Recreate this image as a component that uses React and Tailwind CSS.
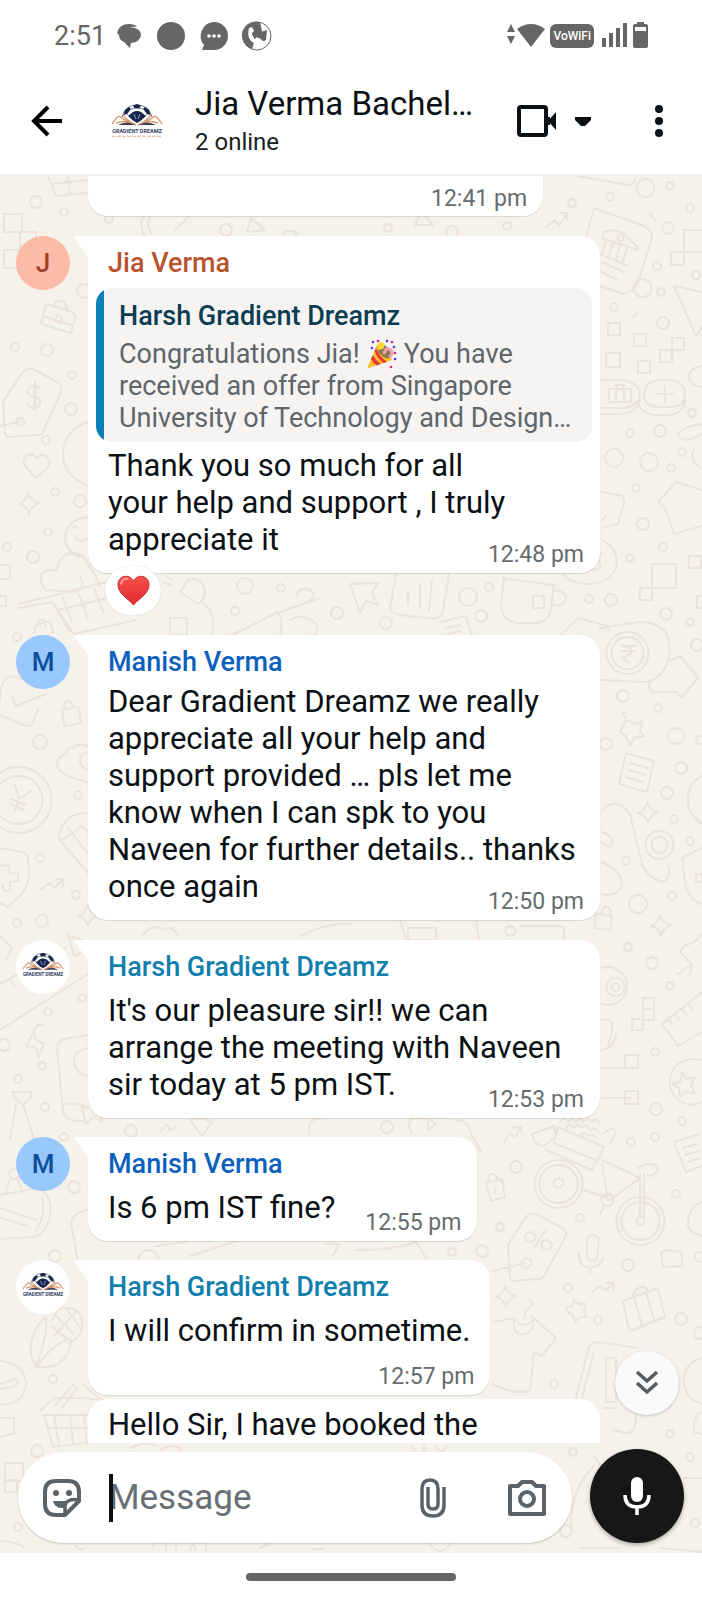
const messages = [
  {
    id: 1,
    author: 'Jia Verma',
    nameColor: 'text-[#b9532f]',
    avatar: 'jia',
    quote: {
      author: 'Harsh Gradient Dreamz',
      before: 'Congratulations Jia!',
      after: 'You have',
      rest: 'received an offer from Singapore\nUniversity of Technology and Design…',
    },
    lines: ['Thank you so much for all', 'your help and support , I truly', 'appreciate it'],
    time: '12:48 pm',
    reaction: true,
    layout: 'wide',
    textGap: 'mt-[5px]',
    margin: 'mt-5',
  },
  {
    id: 2,
    author: 'Manish Verma',
    nameColor: 'text-[#0b5fbf]',
    avatar: 'manish',
    lines: [
      'Dear Gradient Dreamz we really',
      'appreciate all your help and',
      'support provided … pls let me',
      'know when I can spk to you',
      'Naveen for further details.. thanks',
      'once again',
    ],
    time: '12:50 pm',
    layout: 'wide',
    textGap: 'mt-1.5',
    margin: 'mt-[62px]',
  },
  {
    id: 3,
    author: 'Harsh Gradient Dreamz',
    nameColor: 'text-[#0f7fae]',
    avatar: 'logo',
    lines: ["It's our pleasure sir!! we can", 'arrange the meeting with Naveen', 'sir today at 5 pm IST.'],
    time: '12:53 pm',
    layout: 'wide',
    textGap: 'mt-2.5',
    margin: 'mt-5',
  },
  {
    id: 4,
    author: 'Manish Verma',
    nameColor: 'text-[#0b5fbf]',
    avatar: 'manish',
    lines: ['Is 6 pm IST fine?'],
    time: '12:55 pm',
    layout: 'inline',
    textGap: 'mt-2.5',
    margin: 'mt-[19px]',
  },
  {
    id: 5,
    author: 'Harsh Gradient Dreamz',
    nameColor: 'text-[#0f7fae]',
    avatar: 'logo',
    lines: ['I will confirm in sometime.'],
    time: '12:57 pm',
    layout: 'stacked',
    textGap: 'mt-2.5',
    margin: 'mt-[19px]',
  },
]

function LogoMark({ className, tagline }) {
  return (
    <svg viewBox="0 0 52 36" className={className} aria-hidden="true">
      <path d="M11 14 Q14 2 26 2 Q38 2 41 14" fill="none" stroke="#6f7688" strokeWidth="1" />
      <path d="M22 2.5 L26 1 L30 2.5 L28.500 5.500 H23.500 Z" fill="#17264a" />
      <path d="M14 7 L18 4 L20 6 L16 11 L12.500 12 Z" fill="#17264a" />
      <path d="M38 7 L34 4 L32 6 L36 11 L39.500 12 Z" fill="#17264a" />
      <path d="M17 13 L22 9 Q26 7 30 9 L35 13 L30 17.500 L26 20 L22 17.500 Z" fill="#17264a" />
      <path d="M23 11 L25 16 M29 11 L27 16" stroke="#8fa6cf" strokeWidth="1" />
      <path d="M20 6 L23.500 5.500 M32 6 L28.500 5.500 M16 11 L18 13 M36 11 L34 13" stroke="#7b8294" strokeWidth="1" />
      <path d="M12 11 Q14 17 25 22 M8 13 Q14 18 25 22 M1 21 Q5 15 8 13 M5 20 Q14 16 25 22" fill="none" stroke="#d99a72" strokeWidth="1.500" />
      <path d="M40 11 Q38 17 27 22 M44 13 Q38 18 27 22 M51 21 Q47 15 44 13 M47 20 Q38 16 27 22" fill="none" stroke="#d99a72" strokeWidth="1.500" />
      <path d="M7 22 Q16 17 24 22 Z M45 22 Q36 17 28 22 Z" fill="#3c3f57" />
      <text x="26" y="30" textAnchor="middle" fontSize="5.500" fontWeight="700" fontFamily="Roboto, sans-serif" fill="#33405f">
        GRADIENT DREAMZ
      </text>
      {tagline && <path d="M1 33.500 H51" stroke="#e3c6b4" strokeWidth="1.500" strokeDasharray="4 1" />}
    </svg>
  )
}

function Avatar({ kind }) {
  if (kind === 'logo') {
    return (
      <div className="flex size-[54px] shrink-0 items-center justify-center rounded-full bg-white">
        <LogoMark className="w-[42px]" />
      </div>
    )
  }
  if (kind === 'jia') {
    return (
      <div className="flex size-[54px] shrink-0 items-center justify-center rounded-full bg-[#fdbaa6] text-[26px] font-medium text-[#9c3f26]">
        J
      </div>
    )
  }
  return (
    <div className="flex size-[54px] shrink-0 items-center justify-center rounded-full bg-[#98c8fd] text-[26px] font-medium text-[#0b4f9c]">
      M
    </div>
  )
}

function PartyPopper() {
  return (
    <svg viewBox="0 0 30 30" className="mx-[7px] inline-block size-[30px] align-[-6px]" role="img" aria-label="party popper">
      <path d="M10 6 Q22 10 25 21 L2 29 Q0 29 1 27 Z" fill="#fbc02d" />
      <path d="M6 16 Q9 22 14 25 L9.500 26.500 Q6 24 4 20 Z M9 9 Q12 17 20 23 L16.500 24 Q10 19 7.500 12 Z" fill="#e53935" />
      <ellipse cx="17" cy="12" rx="5" ry="9" transform="rotate(-42 17 12)" fill="#8d7b4e" />
      <path d="M11 11 Q8 4 14 3 Q20 4 16 10 Z" fill="#fdd835" />
      <path d="M17 15 Q19 7 24 11 Q27 15 22 18" fill="none" stroke="#f6a5b5" strokeWidth="3" />
      <g fill="#5e35f2">
        <circle cx="6" cy="3" r="1.300" /><circle cx="20" cy="2" r="1.300" /><circle cx="5" cy="9" r="1.300" />
        <circle cx="27" cy="8" r="1.300" /><circle cx="28" cy="20" r="1.300" />
      </g>
      <g fill="#e0218a">
        <circle cx="11" cy="2" r="1.300" /><circle cx="25" cy="3" r="1.300" /><circle cx="28" cy="14" r="1.300" /><circle cx="24" cy="28" r="1.300" />
      </g>
    </svg>
  )
}

function Heart() {
  return (
    <svg viewBox="0 0 34 32" className="w-[33px]" role="img" aria-label="heart">
      <defs>
        <linearGradient id="heart-fill" x1="0" y1="0" x2="0" y2="1">
          <stop offset="0" stopColor="#f9504c" />
          <stop offset="1" stopColor="#e02a2f" />
        </linearGradient>
      </defs>
      <path
        d="M17 31 C14 26 1 20 1 10 C1 1 12 -2 17 6 C22 -2 33 1 33 10 C33 20 20 26 17 31 Z"
        fill="url(#heart-fill)"
        stroke="#c9262b"
        strokeWidth="1"
      />
      <path d="M4 9 Q6 3 11 4" fill="none" stroke="#ff9a92" strokeWidth="2" strokeLinecap="round" />
    </svg>
  )
}

const circles = [
  [36, 202, 6], [64, 212, 4], [109, 219, 4], [84, 291, 7], [15, 347, 4], [47, 350, 6], [71, 409, 6], [72, 375, 4],
  [46, 440, 4], [55, 492, 4], [80, 501, 6], [48, 532, 4], [7, 547, 4], [33, 557, 6], [17, 637, 4], [226, 230, 6],
  [245, 586, 8], [281, 588, 4], [235, 611, 4], [337, 613, 6], [388, 228, 4], [452, 232, 6], [507, 226, 4], [572, 203, 4],
  [610, 197, 4], [670, 186, 4], [690, 208, 4], [668, 228, 6], [657, 266, 4], [696, 275, 4], [661, 292, 4], [614, 307, 4],
  [663, 323, 6], [692, 413, 4], [660, 431, 6], [630, 433, 4], [614, 458, 9], [649, 462, 9], [682, 452, 4], [671, 468, 4],
  [636, 488, 4], [643, 524, 6], [663, 547, 4], [630, 558, 4], [468, 597, 9], [489, 587, 4], [589, 599, 4], [611, 600, 6],
  [481, 616, 6], [386, 623, 6], [666, 614, 6], [690, 622, 4], [697, 645, 6], [623, 696, 6], [658, 708, 4], [606, 744, 6],
  [676, 736, 8], [700, 740, 4], [681, 768, 6], [667, 793, 6], [674, 819, 4], [690, 841, 4], [626, 861, 4], [638, 904, 9],
  [672, 896, 4], [628, 947, 4], [652, 963, 6], [670, 986, 4], [655, 1052, 4], [40, 742, 7], [78, 795, 4], [40, 858, 4],
  [76, 895, 4], [17, 923, 4], [42, 921, 6], [82, 998, 4], [48, 1012, 4], [4, 1045, 6], [42, 1066, 4], [18, 1079, 4],
  [45, 1107, 4], [64, 1137, 4], [131, 1131, 6], [74, 1187, 6], [55, 1256, 6], [53, 1379, 4], [37, 1451, 6], [18, 1527, 4],
  [387, 1127, 6], [516, 1167, 6], [500, 1227, 4], [482, 1251, 6], [452, 1252, 4], [580, 1218, 4], [628, 1265, 6], [631, 1142, 4],
  [655, 1137, 4], [656, 1109, 6], [682, 1121, 4], [676, 1194, 4], [568, 1288, 4], [681, 1319, 6], [598, 1320, 4], [554, 1384, 4],
  [670, 1434, 4], [573, 1452, 4], [690, 1457, 4], [566, 1531, 6], [695, 1523, 4], [700, 1257, 5], [700, 1333, 6],
]

const sparkles = [[30, 504], [649, 813], [662, 926], [507, 1297], [89, 916]]

const squares = [
  [4, 214, 18], [20, 232, 16], [4, 250, 18], [671, 252, 13], [684, 230, 22], [608, 323, 12], [634, 334, 12], [606, 353, 14],
  [660, 350, 12], [672, 338, 12], [638, 361, 12], [652, 564, 24], [640, 588, 12], [689, 556, 12], [697, 596, 12], [170, 618, 17],
  [643, 998, 11], [643, 1009, 11], [632, 1019, 11], [625, 1055, 13], [625, 1091, 13], [-4, 565, 14], [-4, 596, 10],
  [5, 1463, 18], [5, 1480, 12],
]

const linework = [
  // gift boxes, briefcases and baskets
  'M48 176 l8 20 l32 -3 M52 184 l36 -4 M68 176 l2 18',
  'M46 304 l26 8 q4 2 3 6 l-4 15 l-30 -9 z M43 316 l28 9 M54 306 q2 -8 10 -4 l4 8 M57 315 l5 2 l-1 6 l-6 -2 z',
  'M40 1411 l14 -13 h28 l22 2 M42 1415 h60 M44 1415 l9 32 l40 -5 M54 1415 l5 30 M70 1415 l3 30 M84 1414 l3 30 M47 1428 h42 M55 1405 l18 -20 l4 3 l-16 21 M82 1384 l20 16',
  'M623 1301 l32 -12 q3 0 4 4 l6 24 l-32 13 q-4 0 -5 -4 z M634 1297 l8 28 M646 1292 l8 28 M633 1296 q2 -10 12 -9 l4 6',
  'M600 380 h20 q20 2 20 15 q-2 13 -20 13 h-20 M609 389 h22 v13 h-22 z M616 389 v-4 h8 v4 M616 389 v13 M624 389 v13 M600 414 h20 q18 -2 20 -14',
  'M660 380 h10 q15 2 15 14 q0 13 -15 13 h-10 q-16 0 -16 -13 q2 -14 16 -14 M656 394 h17 M665 386 v16 M638 404 q4 9 16 11 h16 q14 -2 15 -15',
  // price tags
  'M3 402 l20 -30 q6 -5 12 -2 l22 12 q6 4 4 10 l-18 40 q-2 4 -8 3 l-26 2 q-4 -1 -4 -5 z M20 418 a4 4 0 1 0 1 0 M0 426 l18 -4 M40 388 q-10 -6 -12 3 q0 6 8 6 q7 2 3 9 q-6 5 -12 -2 M35 382 v28',
  'M508 1245 l18 -28 q4 -5 10 -3 l26 14 q5 3 4 8 l-22 40 q-3 4 -8 3 l-22 2 q-4 -1 -4 -5 z M526 1258 a5 5 0 1 0 1 0 M493 1271 l32 -8 M530 1232 a5 5 0 1 0 1 0 M546 1240 a5 5 0 1 0 1 0 M546 1230 l-12 18',
  // hearts and smiles
  'M36 478 l-11 -12 q-4 -7 3 -11 q6 -2 9 4 q3 -6 9 -3 q6 4 2 11 z',
  'M88 422 q-24 8 -25 32 q0 22 25 32 M88 517 q-22 2 -23 22 q2 14 16 18 M72 528 q3 -3 6 0 M74 536 q6 8 14 2',
  'M46 590 q-8 -8 -4 -16 q5 -6 14 -3 q4 -18 18 -18 q14 2 14 14 M46 590 l30 2 q10 -6 4 -16 M82 556 q14 18 18 30',
  // cart
  'M18 604 l34 -8 l54 -14 M18 608 l34 -6 l18 30 M52 602 l22 32 l62 -14 M62 596 l10 26 M78 592 l10 26 M94 588 l10 26 M58 610 l50 -12',
  'M34 633 l2 -8 l14 -4 l3 12 M38 624 q0 -6 5 -4 q4 2 2 6',
  // padlocks
  'M62 710 l14 -3 q2 0 3 2 l2 14 l-14 3 q-3 0 -3 -2 z M64 709 q-1 -8 4 -8 q5 0 5 6',
  'M596 914 l16 2 l-2 14 l-16 -2 z M601 914 q2 -9 7 -7 q4 2 2 8',
  'M486 1183 l16 -4 l3 18 l-14 4 z M489 1182 q-2 -9 4 -8 q4 1 4 6 M495 1189 v4',
  // ticked envelope
  'M0 700 q0 -22 12 -24 l14 4 M12 697 l4 9 l30 -12 M0 715 l26 11 q6 0 7 -4 l5 -13',
  // coin and shield
  'M19 767 a33 33 0 1 1 -1 0 M19 776 a24 24 0 1 1 -1 0 M15 785 l4 14 l12 -8 M19 799 l-5 13 M10 799 l16 6 M10 804 l14 6',
  'M0 848 l22 4 q7 1 6 8 q4 24 -8 36 l-12 11 l-8 -4 M0 866 l8 -1 l2 8 l8 1 v7 l-8 1 v8 l-6 1 l-2 -7',
  'M88 746 q-10 -4 -14 2 q-8 -2 -8 6 q-12 4 -8 14 q4 8 30 14 M88 752 q-8 2 -8 8 q0 8 8 10',
  'M88 813 q-14 0 -20 6 q-10 10 -9 20 l29 34 M62 840 l20 -14 l6 6 M68 828 l20 26',
  // trend arrows
  'M40 890 l10 -7 l4 5 l9 -9 M56 879 h7 v7',
  'M546 227 l9 -7 l4 6 l8 -12 M560 213 l7 0 v7',
  'M504 1143 l6 -10 l5 4 l6 -10 M513 1128 l8 -1 l1 7',
  'M592 1292 l8 -6 l6 4 l8 -7 M606 1283 l8 0 l-1 7',
  // camera, tie, notebook
  'M88 1035 l-24 4 q-7 2 -7 10 l6 62 q1 6 8 9 l17 2 M88 1048 q-14 2 -14 14 q2 12 14 14 M66 1104 q12 -2 22 4 M82 1106 l4 18 l8 -8 l8 6 l-2 -12',
  'M12 1092 h20 l-2 7 l-7 6 l-7 -6 z M16 1104 l-6 36 M23 1104 l12 38',
  'M0 1195 l34 -6 q10 0 14 8 q6 14 -2 30 q-4 8 -12 10 l-34 2 M0 1208 l36 12 M0 1218 l28 8 M42 1197 q4 18 -6 34 M14 1168 q-8 4 -3 10 q6 3 9 -3 q0 -6 -6 -7 M10 1180 l-4 12 M18 1180 l4 10',
  'M88 1210 q-20 4 -16 18 l6 34',
  // plane, ruler
  'M0 936 l12 12 l-6 12 M0 984 l66 -36 M0 1030 l88 -56 M10 980 l4 6 M18 976 l4 6 M26 972 l4 6',
  'M68 934 l6 22 l16 -8 M68 936 l14 4',
  'M34 1032 l-8 14 l10 2 l2 10 l6 -14 l-8 -4 z M34 1030 q4 -8 10 -4',
  // corn
  'M36 1367 q-8 -14 -4 -28 q4 -14 14 -22 q2 18 -10 50 q20 -26 34 -28 q2 10 -6 20 q-10 10 -28 8 M52 1320 q6 -14 14 -12 q14 0 16 12 q2 16 -12 22 M56 1316 l18 18 M66 1309 l14 18 M52 1326 l14 12 M76 1312 l-22 24',
  'M0 1361 q24 2 26 22 q0 20 -26 22 M0 1384 l16 -5 q3 4 -1 7 l-15 3 M0 1418 h14 v15 l-14 4',
  // shelf of doodles between the bubbles
  'M144 235 q-6 -14 2 -22 M152 234 q-8 -12 0 -21 M175 230 q16 -14 14 -16 M247 232 l4 -14 l14 12 z M284 235 v-4 h12 v4 M415 225 l6 -14 l12 14 z',
  'M180 592 l8 -12 q10 -4 16 6 q4 12 -6 18 z M204 604 q12 8 8 30 M164 583 l8 2 M166 576 l6 4 M230 636 l48 -24 q6 8 2 22 M280 612 l40 -14 M296 597 q2 -10 12 -8 q10 4 2 12 M290 620 q14 -8 26 4 q4 10 -6 12',
  'M350 584 l28 -1 l-6 10 l6 12 l-12 -4 l-6 12 z M396 574 l-6 34 q2 6 10 7 l34 4 q8 -2 9 -8 l6 -37 M408 592 v12 M420 584 v22 M432 580 l-3 30 M504 577 l-3 30 q2 14 16 16 h20 q12 -2 14 -14 l3 -24 l-48 -6 M533 596 h11 v12 h-11 z M555 590 q14 2 10 12 q-4 6 -14 2',
  'M440 622 l26 -6 l6 20 M446 628 l14 -3 M448 634 l12 -3 M560 636 l18 -18 l30 8 l2 6',
  'M142 936 q10 -14 22 -6 q8 -6 14 6 M300 936 q30 -14 50 -12 M400 920 l6 20 M408 928 h28 v12 h-28 z M476 922 l3 18 M520 926 h40 q4 0 4 6 v8 M510 926 a5 5 0 1 0 1 0',
  'M190 1120 l12 16 l10 -14 l-10 -4 z M160 1132 l6 -8 l4 6 l6 -4 M310 1134 q-4 -16 12 -16 M412 1134 q-8 -16 6 -16 h30 M428 1118 l8 6 l-8 6 z M455 1120 q14 0 16 14 l10 18',
  'M148 1250 a10 10 0 1 0 1 0 M156 1246 l30 -4 M190 1256 l50 -16 M356 1250 q40 0 60 -8 l10 16 M325 1244 h14 l-6 12',
  'M130 1448 q18 -8 26 -2 M160 1450 q14 -8 22 0 M412 1446 l4 6 M424 1446 v8 M436 1446 q6 10 10 0',
  'M76 1546 q4 6 10 2 M152 1548 l4 -6 h6 M166 1550 v-8 h10 v8 M190 1550 l3 -7 l3 7 M206 1543 v8 M260 1548 l8 -4 M312 1549 h12 M430 1544 q10 14 20 0 M0 1541 q14 0 24 6',
  // bank page
  'M586 238 l8 -30 l50 18 q8 4 8 12 l-14 44 q-4 10 -14 12 l-24 -8 M604 232 q16 -6 26 8 q8 6 8 10 l-36 -12 z M606 240 l-4 14 M613 242 l-4 14 M620 245 l-4 14 M627 248 l-4 14 M600 254 l28 12 M602 262 l22 10 M602 272 l16 8 M620 235 a3 3 0 1 0 1 0',
  'M645 197 a9 9 0 1 1 1 0 M650 214 l5 6 M642 297 a9 9 0 1 1 1 0 M637 313 l-5 5',
  'M702 292 l-28 -6 l22 50 l6 -10 M578 176 l50 9 q6 0 7 -6 M702 366 q-14 2 -13 12 q2 8 13 9 M702 424 q-24 4 -24 12 q6 8 24 -2 M694 450 q-6 8 6 18',
  'M602 492 l20 4 q3 4 2 8 l-6 20 l-16 4 M602 520 l4 -4 M676 482 l26 8 M676 482 l-18 20 l6 4 l10 28 l28 -8 M602 540 q18 10 14 28 q-6 16 -30 16 q-18 -2 -22 -10 M590 550 q16 0 8 10 q8 10 -8 10',
  // rupee note
  'M600 628 l40 -6 q18 0 27 12 q6 20 -2 34 q-8 14 -22 14 l-42 -2 M628 632 a21 21 0 1 1 -1 0 M628 637 a16 16 0 1 1 -1 0 M622 646 h14 M622 651 h12 M624 646 q10 2 6 8 q-4 4 -8 3 l8 7',
  'M668 662 l12 -6 l18 22 l-17 20 l-4 -6 h-22 q-8 0 -5 -12',
  'M626 720 l10 4 l6 -2 l-2 10 l4 4 l-10 2 l-4 8 l-4 -10 l-6 -4 z M626 718 q-6 -6 0 -6',
  'M626 753 l28 8 l-7 31 l-28 -8 z M630 763 l18 5 M628 770 l18 5 M626 777 l16 5',
  // stethoscope
  'M602 810 q14 -14 28 4 l12 50 q6 14 20 18 q10 -4 6 -16 M660 831 a14 14 0 1 1 -1 0 M660 837 a8 8 0 1 1 -1 0 M602 832 q12 4 10 12 q-4 6 -10 -2 M602 862 q20 10 20 22 q-4 14 -20 10',
  'M702 776 q-16 8 -14 28 q2 12 14 20 M702 848 l-20 10 l4 30 q6 14 16 16 M696 874 h6 v8 h-6 z',
  'M702 934 l-8 8 l-10 4 l-4 6 l12 12 l-2 12 M692 964 l-14 10 M602 968 a19 19 0 1 1 0 36 M616 978 a9 9 0 1 1 -1 0 M616 983 a4 4 0 1 1 -1 0',
  'M702 992 l-40 32 l16 22 l24 -14 M668 1020 l4 4 M675 1015 l4 4 M682 1010 l4 4 M689 1005 l4 4',
  'M602 1020 q12 -4 10 12 l-4 14 M602 1050 q12 -2 14 -16 M602 1068 h28 M602 1098 h28 M702 1060 q-18 -4 -28 8 q-10 18 4 32 q12 8 24 2 M682 1072 l5 7 l8 -2 l-4 8 l4 8 l-9 -1 l-6 5 l-1 -9 l-6 -4 l8 -3 z',
  // bicycle with a crate of fruit
  'M559 1160 a24 24 0 1 1 -1 0 M559 1165 a19 19 0 1 1 -1 0 M559 1178 a5 5 0 1 1 -1 0',
  'M641 1197 a24 24 0 1 1 -1 0 M641 1202 a19 19 0 1 1 -1 0 M641 1217 a4 4 0 1 1 -1 0',
  'M558 1127 l46 20 l-6 14 l-44 -18 z M546 1150 l46 20 l6 -12 M532 1134 l22 -8 l2 10 l-12 10 q-10 0 -12 -12 M584 1190 l24 8 M602 1160 l38 18 l-30 22 M602 1164 l6 36 M640 1174 v44 M644 1174 v44 M638 1168 q14 -8 20 0 q-2 8 -10 8 M608 1194 a6 6 0 1 1 -1 0 M604 1206 l-4 8',
  'M560 1122 q4 -6 8 0 q4 -6 8 0 q4 -6 8 0 q4 -6 8 0 q4 -6 8 2 M566 1128 q4 -6 8 0 q4 -6 8 0 q4 -6 8 2 q4 -4 8 2 M580 1136 q4 -6 8 0 q4 -4 8 2 M602 1134 l10 -6 l4 4 l-6 12',
  'M674 1142 l26 -8 M674 1142 l12 30 l16 -6 M683 1148 l14 -4 M685 1155 l14 -4 M688 1162 l12 -4',
  'M587 1238 q6 -6 12 0 l-2 20 q-6 6 -10 0 z M579 1252 q-2 14 12 16 q10 -2 12 -10 M590 1268 v5 M661 1253 l6 -3 l14 2 l2 14 l-20 1 z M702 1202 q-12 4 -14 20 q-2 10 14 14',
  'M566 1307 l6 -1 l2 -6 l5 4 l7 0 l-2 7 l3 6 l-7 0 l-5 5 l-2 -7 l-6 -3 z',
  // t-shirt on a hanger
  'M494 1322 l20 -4 q10 14 20 0 l22 20 l-14 18 l-8 -4 l-4 38 q-12 6 -38 -6 M514 1318 q-2 18 10 16 q12 -2 8 -18 M524 1318 l2 -8 q10 -6 4 -10',
  'M576 1398 l12 -48 q2 -8 10 -8 l40 6 M582 1398 l12 -46 M606 1358 h10 v44 h-10 z M604 1408 h12 M636 1414 q0 20 -10 19 l-14 -3',
  'M702 1358 q-20 6 -18 26 q2 16 18 20 M702 1412 q-10 4 -8 20 l8 2 M572 1532 q-4 -40 22 -66 M594 1456 l10 14 M684 1478 h18 M580 1548 h40 M660 1548 l42 4',
]

function Wallpaper() {
  return (
    <svg
      viewBox="0 176 702 1377"
      preserveAspectRatio="xMidYMin slice"
      className="absolute inset-0 size-full"
      fill="none"
      stroke="#ece2d9"
      strokeWidth="2"
      strokeLinecap="round"
      strokeLinejoin="round"
      aria-hidden="true"
    >
      {circles.map(([x, y, r]) => (
        <circle key={`${x}-${y}`} cx={x} cy={y} r={r} />
      ))}
      {squares.map(([x, y, s]) => (
        <rect key={`${x}-${y}`} x={x} y={y} width={s} height={s} />
      ))}
      {sparkles.map(([x, y]) => (
        <path key={`${x}-${y}`} d={`M${x - 2} ${y - 11} q2 8 11 10 q-8 3 -10 11 q-2 -8 -10 -10 q8 -3 9 -11 z`} />
      ))}
      {linework.map((d) => (
        <path key={d} d={d} />
      ))}
    </svg>
  )
}

function StatusBar() {
  return (
    <div className="flex h-[72px] items-center justify-between pr-[54px] pl-[54px] text-[#666]">
      <div className="flex items-center">
        <span className="text-[27px] leading-8">2:51</span>
        <svg viewBox="0 0 156 30" className="ml-2.5 h-[30px] w-[156px]" fill="#666" aria-hidden="true">
          <path d="M1 12 Q3 3 13 3 Q19 3 21 6 Q8 4 3 14 Z" />
          <path d="M3 14 Q5 6 14 6 Q25 7 25 14 Q24 21 15 22 L14 27 L8 21 Q3 19 3 14 Z" />
          <circle cx="55" cy="15" r="14" />
          <path d="M98 1 A14 14 0 1 1 98 29 H86 L88 24 A14 14 0 0 1 98 1 Z" />
          <g fill="#fff"><circle cx="93" cy="15" r="1.800" /><circle cx="98" cy="15" r="1.800" /><circle cx="103" cy="15" r="1.800" /></g>
          <circle cx="141" cy="15" r="14" fill="#fff" stroke="#666" strokeWidth="1" />
          <path d="M144 1 A14 14 0 0 0 136 28 L139 18 L146 10 Z" />
          <path d="M136 9 Q144 12 151 9 L150 19 L146 21 L145 18 L138 15 Z" />
          <path d="M133 7 Q129 23 146 24 L149 21 L144 18 L141 20 Q136 16 136 12 L138 10 L136 6 Z" fill="#fff" />
        </svg>
      </div>
      <div className="flex items-center">
        <svg viewBox="0 0 40 30" className="mr-1 h-[30px] w-10" fill="#666" aria-hidden="true">
          <path d="M1 11 L5 3 L9 11 Z M1 15 L5 23 L9 15 Z" />
          <path d="M11 8 Q25 -2 39 8 L25 26 Z" />
        </svg>
        <span className="rounded-md bg-[#666] px-[3px] text-[12px] leading-6 font-medium text-white">VoWiFi</span>
        <svg viewBox="0 0 46 28" className="ml-2 h-7 w-[46px]" fill="#666" aria-hidden="true">
          <rect x="0" y="16" width="4" height="9" /><rect x="7" y="11" width="4" height="14" />
          <rect x="14" y="6" width="4" height="19" /><rect x="21" y="1" width="4" height="24" />
          <path d="M35 2 V0 H42 V2 H44 Q46 2 46 4 V24 Q46 26 44 26 H33 Q31 26 31 24 V4 Q31 2 33 2 Z M33 5 V9 H44 V5 Z" fillRule="evenodd" />
        </svg>
      </div>
    </div>
  )
}

function Header() {
  return (
    <header className="shrink-0 border-b-2 border-[#f1f1f0] bg-white">
      <StatusBar />
      <div className="flex h-[98px] items-center pl-[31px]">
        <button type="button" aria-label="Back">
          <svg viewBox="0 0 32 32" className="size-8" fill="none" stroke="#000" strokeWidth="4" aria-hidden="true">
            <path d="M31 16 H4 M17 2 L3 16 L17 30" />
          </svg>
        </button>
        <LogoMark className="ml-12 w-[52px] shrink-0" tagline />
        <div className="ml-8 w-[284px] min-w-0">
          <h1 className="text-[33px] leading-9 whitespace-nowrap text-[#0b1014]">Jia Verma Bachel…</h1>
          <p className="mt-1.5 text-[24px] leading-7 text-[#1b2023]">2 online</p>
        </div>
        <button type="button" aria-label="Video call" className="ml-auto shrink-0">
          <svg viewBox="0 0 76 34" className="h-[34px] w-[76px]" aria-hidden="true">
            <rect x="3" y="3" width="27" height="28" rx="2" fill="none" stroke="#0b1014" strokeWidth="4" />
            <path d="M32 17 L40 8 V26 Z M31 13 H34 V21 H31 Z" fill="#0b1014" />
            <path d="M59 13 H75 V16 L69 22 H65 L59 16 Z" fill="#0b1014" />
          </svg>
        </button>
        <button type="button" aria-label="More options" className="mr-9 ml-[60px] shrink-0">
          <svg viewBox="0 0 14 34" className="h-[34px] w-[14px]" fill="#0b1014" aria-hidden="true">
            <circle cx="7" cy="5" r="4" /><circle cx="7" cy="17" r="4" /><circle cx="7" cy="29" r="4" />
          </svg>
        </button>
      </div>
      <div className="h-1" />
    </header>
  )
}

function Quote({ quote }) {
  return (
    <blockquote className="mt-2.5 -mr-3 -ml-3 flex overflow-hidden rounded-2xl bg-[#f5f4f3]">
      <div className="w-2 shrink-0 bg-[#0a7fb8]" />
      <div className="pt-3 pb-2 pl-[15px]">
        <p className="text-[27px] leading-8 font-medium text-[#0b3c50]">{quote.author}</p>
        <p className="mt-1.5 text-[27px] leading-8 whitespace-pre text-[#5f6568]">
          {quote.before}
          <PartyPopper />
          {quote.after}
          {'\n' + quote.rest}
        </p>
      </div>
    </blockquote>
  )
}

function Message({ message }) {
  const { lines, layout } = message
  const firstLines = lines.slice(0, -1)
  const lastLine = lines[lines.length - 1]

  return (
    <li className={`flex gap-[18px] ${message.margin}`}>
      <Avatar kind={message.avatar} />
      <div
        className={`relative rounded-[20px] rounded-tl-none bg-white px-5 pt-3 pb-[6px] shadow-[0_1px_1px_rgba(0,0,0,0.12)] ${
          layout === 'wide' ? 'w-full max-w-[512px]' : 'w-fit'
        }`}
      >
        <svg viewBox="0 0 15 22" className="absolute top-0 -left-[14px] w-[15px]" fill="#fff" aria-hidden="true">
          <path d="M15 0 H2 Q-1 1 2 4 L15 22 Z" />
        </svg>
        <p className={`text-[27px] leading-[30px] font-medium ${message.nameColor}`}>{message.author}</p>
        {message.quote && <Quote quote={message.quote} />}
        <div className={`text-[31px] leading-[37px] text-[#0b1014] ${message.textGap}`}>
          {firstLines.map((line) => (
            <p key={line}>{line}</p>
          ))}
          {/* The time shares the last line unless the bubble is stacked */}
          <div className={layout === 'stacked' ? 'flex flex-col' : 'flex items-end justify-between gap-[30px]'}>
            <p className={layout === 'stacked' ? 'pb-4' : 'pb-[9px]'}>{lastLine}</p>
            <time className="-mr-1 text-right text-[23px] leading-6 whitespace-nowrap text-[#666b6e]">{message.time}</time>
          </div>
        </div>
        {message.reaction && (
          <button
            type="button"
            aria-label="Reactions"
            className="absolute top-full left-[17px] -mt-[7px] flex h-[49px] w-14 items-center justify-center rounded-full bg-white shadow-[0_0_1px_rgba(0,0,0,0.25)]"
          >
            <Heart />
          </button>
        )}
      </div>
    </li>
  )
}

function Composer() {
  return (
    <form className="relative flex shrink-0 items-center gap-[18px] px-[18px] pt-[9px] pb-2.5" onSubmit={(e) => e.preventDefault()}>
      <div className="flex h-[91px] min-w-0 flex-1 items-center rounded-full bg-white pr-[25px] pl-6 shadow-[0_1px_2px_rgba(0,0,0,0.2)]">
        <button type="button" aria-label="Stickers">
          <svg viewBox="0 0 40 40" className="size-10" fill="none" stroke="#5b6368" strokeWidth="4" strokeLinejoin="round" aria-hidden="true">
            <path d="M14 3 H26 Q37 3 37 14 V23 L23 37 H14 Q3 37 3 26 V14 Q3 3 14 3 Z" />
            <path d="M37 22 Q24 20 23 28 V37" strokeWidth="3.500" />
            <path d="M11 23 H26 L22 30 Q13 31 11 23 Z" fill="#5b6368" stroke="none" />
            <circle cx="14" cy="15" r="3" fill="#5b6368" stroke="none" />
            <circle cx="27" cy="15" r="3" fill="#5b6368" stroke="none" />
          </svg>
        </button>
        <div className="relative ml-[27px] flex min-w-0 flex-1 items-center">
          <input
            type="text"
            aria-label="Message"
            placeholder="Message"
            className="w-full bg-transparent text-[35px] leading-[48px] text-[#0b1014] outline-none placeholder:text-[#686e72]"
          />
          <span className="absolute top-0 left-0 h-12 w-1 bg-[#0b1014]" />
        </div>
        <button type="button" aria-label="Attach" className="shrink-0">
          <svg viewBox="0 0 28 40" className="h-10 w-7" fill="none" stroke="#5b6368" strokeWidth="3.500" aria-hidden="true">
            <path d="M25 9 V27 Q25 38 14 38 Q3 38 3 27 V11 Q3 2 11 2 Q19 2 19 11 V26 Q19 31 14 31 Q9 31 9 26 V9" />
          </svg>
        </button>
        <button type="button" aria-label="Camera" className="ml-[60px] shrink-0">
          <svg viewBox="0 0 40 36" className="h-9 w-10" fill="none" stroke="#5b6368" strokeWidth="4" strokeLinejoin="round" aria-hidden="true">
            <path d="M3 6 H11 L15 2 H25 L29 6 H37 V34 H3 Z" />
            <circle cx="20" cy="19" r="7" />
          </svg>
        </button>
      </div>
      <button
        type="button"
        aria-label="Record voice message"
        className="-mt-2 -mb-1 flex size-[94px] shrink-0 items-center justify-center rounded-full bg-[#171717] shadow-[0_2px_4px_rgba(0,0,0,0.3)]"
      >
        <svg viewBox="0 0 28 38" className="h-[38px] w-7" aria-hidden="true">
          <rect x="8" y="0" width="12" height="25" rx="6" fill="#fff" />
          <path d="M2 18 Q2 30 14 30 Q26 30 26 18 M14 30 V38" fill="none" stroke="#fff" strokeWidth="3.500" />
        </svg>
      </button>
    </form>
  )
}

export default function App() {
  return (
    <div className="flex h-screen flex-col overflow-hidden bg-white font-['Roboto',sans-serif]">
      <Header />

      <main className="relative flex min-h-0 flex-1 flex-col bg-[#f5f2eb]">
        <Wallpaper />
        <ul className="relative min-h-0 flex-1 overflow-hidden px-4">
          <li className="ml-[72px] w-fit">
            <div className="rounded-b-[20px] bg-white pt-[11px] pr-4 pb-[5px] pl-[343px] shadow-[0_1px_1px_rgba(0,0,0,0.12)]">
              <time className="block text-[23px] leading-6 text-[#666b6e]">12:41 pm</time>
            </div>
          </li>
          {messages.map((message) => (
            <Message key={message.id} message={message} />
          ))}
          <li className="mt-1 ml-[72px] max-w-[512px] rounded-t-[20px] bg-white px-5 pt-[7px] pb-5 text-[31px] leading-[37px] text-[#0b1014]">
            Hello Sir, I have booked the
          </li>
        </ul>

        {/* Jump to latest */}
        <button
          type="button"
          aria-label="Scroll to latest"
          className="absolute right-[23px] bottom-[138px] flex size-16 items-center justify-center rounded-full bg-[#fafafa] shadow-[0_1px_3px_rgba(0,0,0,0.2)]"
        >
          <svg viewBox="0 0 24 26" className="w-6" fill="none" stroke="#565c60" strokeWidth="3.500" aria-hidden="true">
            <path d="M2 2 L12 11 L22 2 M2 13 L12 22 L22 13" />
          </svg>
        </button>
        <Composer />
      </main>

      <footer className="flex h-[47px] shrink-0 items-center justify-center bg-white">
        <div className="h-2 w-[210px] rounded-full bg-[#666]" />
      </footer>
    </div>
  )
}
